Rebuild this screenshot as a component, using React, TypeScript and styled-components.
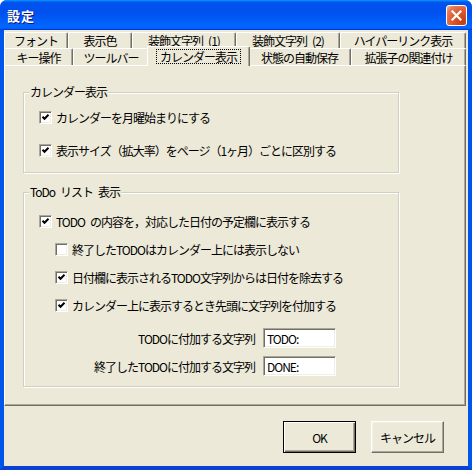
import React from "react";
import styled, { createGlobalStyle, css } from "styled-components";

const FONT = `"Noto Sans CJK JP", "Noto Sans", sans-serif`;

const Global = createGlobalStyle`
  html, body { margin: 0; padding: 0; background: #ffffff; }
  body { font-family: ${FONT}; }
`;

const Window = styled.div`
  width: 472px;
  height: 470px;
  display: flex;
  flex-direction: column;
  border-radius: 7px 7px 0 0;
  overflow: hidden;
  background: #0054e3;
`;

const TitleBar = styled.div`
  height: 30px;
  flex: none;
  display: flex;
  align-items: center;
  justify-content: space-between;
  padding: 0 5px 0 7px;
  box-sizing: border-box;
  background: linear-gradient(
    180deg,
    #0997ff,
    #0053ee 8%,
    #0050ee 40%,
    #0066ff 88%,
    #0066ff 93%,
    #005bff 95%,
    #003dd7 96%,
    #003dd7
  );
`;

const Title = styled.span`
  color: #fff;
  font-weight: bold;
  font-size: 13px;
  letter-spacing: 1px;
  text-shadow: 1px 1px #0a1883;
`;

const CloseButton = styled.button`
  width: 21px;
  height: 21px;
  padding: 0;
  border: 1px solid #fff;
  border-radius: 3px;
  box-sizing: border-box;
  background: radial-gradient(circle at 85% 85%, #c23c14 0%, #e05a30 50%, #e87a57 80%, #f4b9a5 100%);
  display: flex;
  align-items: center;
  justify-content: center;
`;

const Frame = styled.div`
  flex: 1;
  display: flex;
  flex-direction: column;
  box-sizing: border-box;
  border: 4px solid #0055ea;
  border-top: 0;
  border-bottom-color: #0b41d0;
  background: #ece9d8;
  padding-top: 2px;
`;

const TabControl = styled.div`
  width: 462px;
  display: flex;
  flex-direction: column;
`;

const TabRow = styled.div<{ $h: number }>`
  display: flex;
  height: ${(p) => p.$h}px;
`;

const Tab = styled.div<{ $w: number; $selected?: boolean }>`
  flex: none;
  width: ${(p) => p.$w}px;
  box-sizing: border-box;
  border-top: 1px solid #fff;
  border-left: 1px solid #fff;
  border-right: 1px solid #716f64;
  box-shadow: inset -1px 0 0 #aca899;
  border-radius: 2px 2px 0 0;
  display: flex;
  align-items: center;
  justify-content: center;
  font-size: 12px;
  letter-spacing: -1px;
  color: #000;
  background: #ece9d8;
  white-space: pre;
  ${(p) =>
    p.$selected &&
    css`
      position: relative;
      z-index: 1;
      width: ${p.$w + 4}px;
      margin: -2px -2px -1px;
    `}
`;

const Focus = styled.span`
  border: 1px dotted #000;
  padding: 0 3px;
  line-height: 13px;
`;

const Panel = styled.div`
  height: 341px;
  box-sizing: border-box;
  border: 1px solid #fff;
  border-right-color: #716f64;
  border-bottom-color: #716f64;
  box-shadow: inset -1px -1px 0 #aca899;
  padding: 19px 0 0 18px;
`;

const Group = styled.fieldset<{ $mt?: number }>`
  margin: ${(p) => p.$mt ?? 0}px 0 0;
  padding: 0;
  width: 376px;
  min-width: 0;
  box-sizing: border-box;
  border: 1px solid #d0d0bf;
  box-shadow: 1px 1px 0 #fff, inset 1px 1px 0 #fff;
`;

const Legend = styled.legend`
  margin-left: 5px;
  padding: 0 1px;
  font-size: 12px;
  line-height: 14px;
  letter-spacing: -1px;
  color: #000;
  background: #ece9d8;
  white-space: pre;
`;

const GroupBody = styled.div<{ $pt: number; $pb: number; $gap: number }>`
  display: flex;
  flex-direction: column;
  gap: ${(p) => p.$gap}px;
  padding: ${(p) => p.$pt}px 0 ${(p) => p.$pb}px 15px;
`;

const CheckRow = styled.label<{ $indent?: boolean }>`
  display: flex;
  align-items: center;
  gap: 4px;
  height: 20px;
  margin-left: ${(p) => (p.$indent ? 16 : 0)}px;
  font-size: 12px;
  letter-spacing: -1px;
  color: #000;
  white-space: pre;
`;

const Box = styled.span`
  width: 13px;
  height: 13px;
  flex: none;
  box-sizing: border-box;
  background: #fff;
  border: 1px solid;
  border-color: #aca899 #fff #fff #aca899;
  box-shadow: inset 1px 1px 0 #716f64, inset -1px -1px 0 #f1efe2;
  display: flex;
  align-items: center;
  justify-content: center;
`;

const FieldRow = styled.div<{ $mt?: number }>`
  display: grid;
  grid-template-columns: 216px 73px;
  column-gap: 8px;
  align-items: center;
  height: 20px;
  margin-top: ${(p) => p.$mt ?? 0}px;
`;

const FieldLabel = styled.span`
  text-align: right;
  font-size: 12px;
  letter-spacing: -1px;
  white-space: nowrap;
  color: #000;
`;

const TextBox = styled.input`
  width: 73px;
  height: 20px;
  box-sizing: border-box;
  border: 1px solid;
  border-color: #aca899 #fff #fff #aca899;
  box-shadow: inset 1px 1px 0 #716f64, inset -1px -1px 0 #f1efe2;
  padding: 0 0 0 3px;
  font: 12px ${FONT};
  letter-spacing: -1px;
  color: #000;
  background: #fff;
  outline: none;
`;

const ButtonBar = styled.div`
  flex: 1;
  display: flex;
  justify-content: flex-end;
  align-items: flex-start;
  gap: 15px;
  padding: 15px 24px 0 0;
`;

const Button = styled.button<{ $default?: boolean }>`
  width: 73px;
  height: 32px;
  box-sizing: border-box;
  background: #ece9d8;
  font: 12px ${FONT};
  letter-spacing: -1px;
  color: #000;
  padding: 0;
  border: 1px solid;
  border-color: #fff #716f64 #716f64 #fff;
  box-shadow: inset -1px -1px 0 #aca899, inset 1px 1px 0 #f1efe2;
  ${(p) =>
    p.$default &&
    css`
      border: 1px solid #000;
      box-shadow: inset 1px 1px 0 #fff, inset -1px -1px 0 #716f64, inset -2px -2px 0 #aca899;
    `}
`;

const Check: React.FC<{ checked: boolean }> = ({ checked }) => (
  <Box>
    {checked && (
      <svg width="9" height="9" viewBox="0 0 9 9">
        <path d="M1.5 3.8 L3.5 5.8 L7.5 1.8" fill="none" stroke="#000" strokeWidth="2" />
      </svg>
    )}
  </Box>
);

const row1 = [
  { t: "フォント", w: 64 },
  { t: "表示色", w: 64 },
  { t: "装飾文字列\u2002(1)", w: 104 },
  { t: "装飾文字列\u2002(2)", w: 104 },
  { t: "ハイパーリンク表示", w: 126 },
];
const row2 = [
  { t: "キー操作", w: 69 },
  { t: "ツールバー", w: 76 },
  { t: "カレンダー表示", w: 99, sel: true },
  { t: "状態の自動保存", w: 103 },
  { t: "拡張子の関連付け", w: 115 },
];

export default function App() {
  return (
    <>
      <Global />
      <Window>
        <TitleBar>
          <Title>設定</Title>
          <CloseButton aria-label="閉じる">
            <svg width="11" height="11" viewBox="0 0 11 11">
              <path d="M1.5 1.5 L9.5 9.5 M9.5 1.5 L1.5 9.5" stroke="#fff" strokeWidth="2.2" strokeLinecap="square" />
            </svg>
          </CloseButton>
        </TitleBar>
        <Frame>
          <TabControl>
            <TabRow $h={16}>
              {row1.map((t) => (
                <Tab key={t.t} $w={t.w}>
                  {t.t}
                </Tab>
              ))}
            </TabRow>
            <TabRow $h={17}>
              {row2.map((t) => (
                <Tab key={t.t} $w={t.w} $selected={t.sel}>
                  {t.sel ? <Focus>{t.t}</Focus> : t.t}
                </Tab>
              ))}
            </TabRow>
            <Panel>
              <Group>
                <Legend>カレンダー表示</Legend>
                <GroupBody $pt={8} $pb={12} $gap={13}>
                  <CheckRow>
                    <Check checked />
                    カレンダーを月曜始まりにする
                  </CheckRow>
                  <CheckRow>
                    <Check checked />
                    表示サイズ（拡大率）をページ（1ヶ月）ごとに区別する
                  </CheckRow>
                </GroupBody>
              </Group>
              <Group $mt={12}>
                <Legend>{"ToDo\u2002リスト\u2002表示"}</Legend>
                <GroupBody $pt={12} $pb={10} $gap={8}>
                  <CheckRow>
                    <Check checked />
                    {"TODO\u2002の内容を，対応した日付の予定欄に表示する"}
                  </CheckRow>
                  <CheckRow $indent>
                    <Check checked={false} />
                    終了したTODOはカレンダー上には表示しない
                  </CheckRow>
                  <CheckRow $indent>
                    <Check checked />
                    日付欄に表示されるTODO文字列からは日付を除去する
                  </CheckRow>
                  <CheckRow $indent>
                    <Check checked />
                    カレンダー上に表示するとき先頭に文字列を付加する
                  </CheckRow>
                  <FieldRow $mt={5}>
                    <FieldLabel>TODOに付加する文字列</FieldLabel>
                    <TextBox defaultValue="TODO:" readOnly />
                  </FieldRow>
                  <FieldRow>
                    <FieldLabel>終了したTODOに付加する文字列</FieldLabel>
                    <TextBox defaultValue="DONE:" readOnly />
                  </FieldRow>
                </GroupBody>
              </Group>
            </Panel>
          </TabControl>
          <ButtonBar>
            <Button $default>OK</Button>
            <Button>キャンセル</Button>
          </ButtonBar>
        </Frame>
      </Window>
    </>
  );
}
